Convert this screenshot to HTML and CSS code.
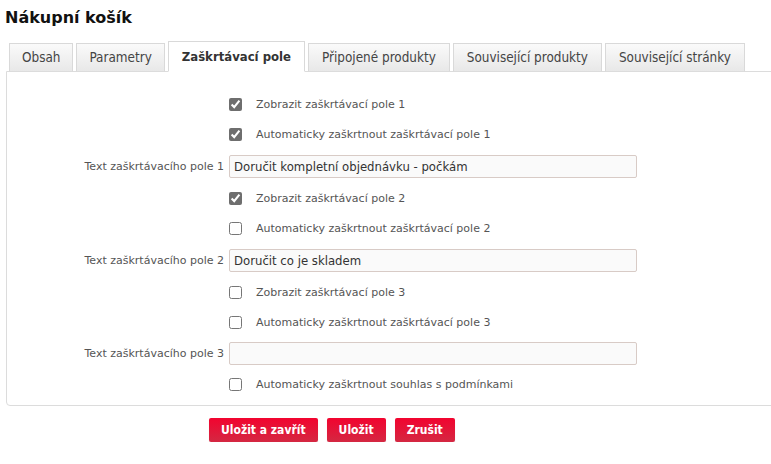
FILE: index.html
```html
<!DOCTYPE html>
<html lang="cs">
<head>
<meta charset="utf-8">
<title>Nákupní košík</title>
<link rel="stylesheet" href="styles.css">
</head>
<body>
<h1 class="title">Nákupní košík</h1>
<div class="tabs">
  <div class="tab">Obsah</div>
  <div class="tab">Parametry</div>
  <div class="tab active">Zaškrtávací pole</div>
  <div class="tab">Připojené produkty</div>
  <div class="tab">Související produkty</div>
  <div class="tab">Související stránky</div>
</div>
<div class="panel">
  <div class="row"><span></span><label class="check"><input type="checkbox" checked><span>Zobrazit zaškrtávací pole 1</span></label></div>
  <div class="row"><span></span><label class="check"><input type="checkbox" checked><span>Automaticky zaškrtnout zaškrtávací pole 1</span></label></div>
  <div class="row row-input"><span class="lbl">Text zaškrtávacího pole 1</span><input class="text" type="text" value="Doručit kompletní objednávku - počkám"></div>
  <div class="row"><span></span><label class="check"><input type="checkbox" checked><span>Zobrazit zaškrtávací pole 2</span></label></div>
  <div class="row"><span></span><label class="check"><input type="checkbox"><span>Automaticky zaškrtnout zaškrtávací pole 2</span></label></div>
  <div class="row row-input"><span class="lbl">Text zaškrtávacího pole 2</span><input class="text" type="text" value="Doručit co je skladem"></div>
  <div class="row"><span></span><label class="check"><input type="checkbox"><span>Zobrazit zaškrtávací pole 3</span></label></div>
  <div class="row"><span></span><label class="check"><input type="checkbox"><span>Automaticky zaškrtnout zaškrtávací pole 3</span></label></div>
  <div class="row row-input short"><span class="lbl">Text zaškrtávacího pole 3</span><input class="text" type="text" value=""></div>
  <div class="row"><span></span><label class="check"><input type="checkbox"><span>Automaticky zaškrtnout souhlas s podmínkami</span></label></div>
</div>
<div class="actions">
  <button class="btn">Uložit a zavřít</button>
  <button class="btn">Uložit</button>
  <button class="btn">Zrušit</button>
</div>
</body>
</html>
```
FILE: styles.css
```css
html, body {
  margin: 0;
  padding: 0;
  background: #fff;
  overflow: hidden;
}
body {
  font-family: "DejaVu Sans", Verdana, sans-serif;
  color: #333;
  width: 771px;
}
.title {
  font-size: 16px;
  line-height: 20px;
  font-weight: bold;
  color: #111;
  margin: 8px 0 13px 5px;
}
.tabs {
  display: flex;
  align-items: flex-end;
  gap: 3px;
  margin-left: 9px;
  margin-bottom: -1px;
  position: relative;
  z-index: 1;
}
.tab {
  box-sizing: border-box;
  height: 29px;
  padding: 0 13px;
  border: 1px solid #d9d9d9;
  border-bottom-color: #dcdcdc;
  background: linear-gradient(#fafafa, #e8e8e8);
  font-family: "DejaVu Sans Condensed", "DejaVu Sans", sans-serif;
  font-size: 13.4px;
  line-height: 27px;
  color: #444;
  white-space: nowrap;
}
.tab:nth-child(-n+2) {
  padding: 0 12px;
}
.tab.active {
  height: 31px;
  line-height: 29px;
  background: #fff;
  border-bottom-color: #fff;
  font-size: 13px;
  font-weight: bold;
  color: #333;
}
.panel {
  margin-left: 6px;
  margin-right: -20px;
  border: 1px solid #dcdcdc;
  border-radius: 0 0 4px 4px;
  padding: 17px 0 6px 0;
}
.row {
  display: grid;
  grid-template-columns: 217px 1fr;
  column-gap: 5px;
  align-items: center;
  height: 30px;
}
.row-input { height: 34px; }
.row-input.short { height: 32px; }
.lbl {
  text-align: right;
  font-size: 11px;
  color: #555;
  white-space: nowrap;
}
.check {
  display: flex;
  align-items: center;
  gap: 14px;
  font-size: 11px;
  color: #555;
}
.check input {
  margin: 0;
  width: 13px;
  height: 13px;
  accent-color: #6e6e6e;
}
.text {
  box-sizing: border-box;
  width: 408px;
  height: 23px;
  margin: 0;
  padding: 0 4px;
  border: 1px solid #d8cbc6;
  border-radius: 2px;
  background: #fafafa;
  font-family: "DejaVu Sans Condensed", "DejaVu Sans", sans-serif;
  font-size: 13px;
  color: #333;
  outline: none;
}
.actions {
  display: flex;
  gap: 9px;
  margin: 12px 0 0 209px;
}
.btn {
  height: 24px;
  padding: 0 12px;
  border: 0;
  border-radius: 2px;
  background: linear-gradient(#f2042f, #d42842);
  color: #fff;
  font-family: "DejaVu Sans Condensed", "DejaVu Sans", sans-serif;
  font-weight: bold;
  font-size: 12px;
  box-shadow: 0 1px 1px rgba(0,0,0,0.15);
}
```
